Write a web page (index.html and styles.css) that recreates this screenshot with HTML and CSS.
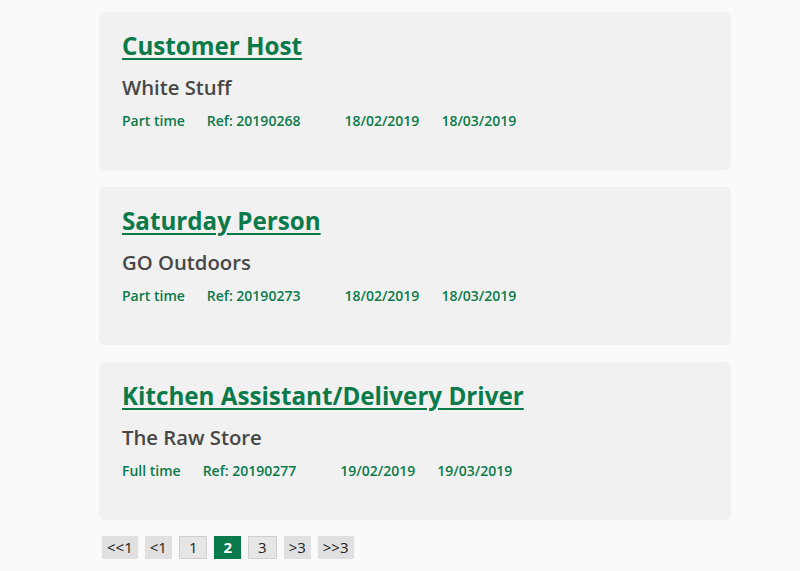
FILE: index.html
```html
<!DOCTYPE html>
<html lang="en">
<head>
    <meta charset="UTF-8">
    <meta name="viewport" content="width=device-width, initial-scale=1.0">
    <title>Vacancies</title>
    <link rel="stylesheet" href="styles.css">
</head>
<body>
    <div class="jobs">
        <div class="job">
            <h2><a href="#">Customer Host</a></h2>
            <div class="employer">White Stuff</div>
            <div class="meta">
                <span>Part time</span>
                <span class="ref">Ref: 20190268</span>
                <span>18/02/2019</span>
                <span>18/03/2019</span>
            </div>
        </div>
        <div class="job">
            <h2><a href="#">Saturday Person</a></h2>
            <div class="employer">GO Outdoors</div>
            <div class="meta">
                <span>Part time</span>
                <span class="ref">Ref: 20190273</span>
                <span>18/02/2019</span>
                <span>18/03/2019</span>
            </div>
        </div>
        <div class="job">
            <h2><a href="#">Kitchen Assistant/Delivery Driver</a></h2>
            <div class="employer">The Raw Store</div>
            <div class="meta">
                <span>Full time</span>
                <span class="ref">Ref: 20190277</span>
                <span>19/02/2019</span>
                <span>19/03/2019</span>
            </div>
        </div>
        <div class="pager">
            <a href="#" class="step">&lt;&lt;1</a>
            <a href="#" class="step">&lt;1</a>
            <a href="#" class="page">1</a>
            <span class="page current">2</span>
            <a href="#" class="page">3</a>
            <a href="#" class="step">&gt;3</a>
            <a href="#" class="step">&gt;&gt;3</a>
        </div>
    </div>
</body>
</html>
```

FILE: styles.css
```css
body {
    margin: 0;
    background-color: #fafafa;
    font-family: "Open Sans", sans-serif;
    color: #444;
}
.jobs {
    width: 632px;
    margin: 12px 0 0 99px;
}
.job {
    box-sizing: border-box;
    background-color: #f1f1f1;
    border-radius: 6px;
    padding: 18px 23px 0;
    height: 158px;
    margin-bottom: 17px;
}
.job h2 {
    margin: 0;
    font-size: 24.2px;
    line-height: 32px;
    font-weight: 700;
}
.job h2 a {
    color: #0b7a4b;
    text-decoration: underline;
    text-underline-offset: 3px;
}
.employer {
    margin-top: 12px;
    font-size: 20.3px;
    line-height: 26px;
    font-weight: 600;
    color: #474747;
}
.meta {
    margin-top: 11px;
    font-size: 14px;
    line-height: 19px;
    font-weight: 600;
    color: #0b7a4b;
    display: flex;
}
.meta span {
    margin-right: 22px;
}
.meta .ref {
    margin-right: 44px;
}
.pager {
    display: flex;
    gap: 7px;
    margin: -1px 0 0 3px;
}
.pager a,
.pager span {
    font-size: 15px;
    line-height: 21px;
    padding: 0 4px;
    color: #222;
    text-decoration: none;
    background-color: #e0e0e0;
    border: 1px solid #e0e0e0;
}
.pager .page {
    padding: 0 9px;
    background-color: #e6e6e6;
    border-color: #cfcfcf;
}
.pager .current {
    padding: 0 8px;
    background-color: #0b7a4b;
    border-color: #0b7a4b;
    color: #fff;
    font-weight: 700;
}
```
